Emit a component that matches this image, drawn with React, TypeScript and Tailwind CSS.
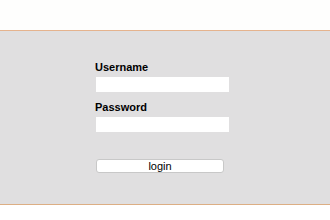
import React from 'react';

export default function App() {
    return (
        <div className="w-[330px] h-[220px] bg-white flex flex-col" style={{ fontFamily: '"Liberation Sans", Arial, sans-serif' }}>
            <div className="h-[30px] bg-[#fefefd]" />
            <div className="h-[1px] bg-[#e5b38e]" />
            <div className="h-[173px] bg-[#e0dfe0] pl-[95px] pt-[29px] flex flex-col">
                <label className="text-[11px] font-bold leading-[14px] text-black">Username</label>
                <input type="text" className="mt-[3px] ml-[1px] w-[133px] h-[15px] bg-white outline-none" />
                <label className="mt-[8px] text-[11px] font-bold leading-[14px] text-black">Password</label>
                <input type="password" className="mt-[3px] ml-[1px] w-[133px] h-[15px] bg-white outline-none" />
                <button className="mt-[27px] ml-[1px] w-[128px] h-[14px] bg-white rounded-[3px] border border-[#c8c8c8] text-[11px] leading-[12px] text-black flex items-center justify-center">
                    login
                </button>
            </div>
            <div className="h-[1px] bg-[#dcae84]" />
            <div className="flex-1 bg-white" />
        </div>
    );
}
